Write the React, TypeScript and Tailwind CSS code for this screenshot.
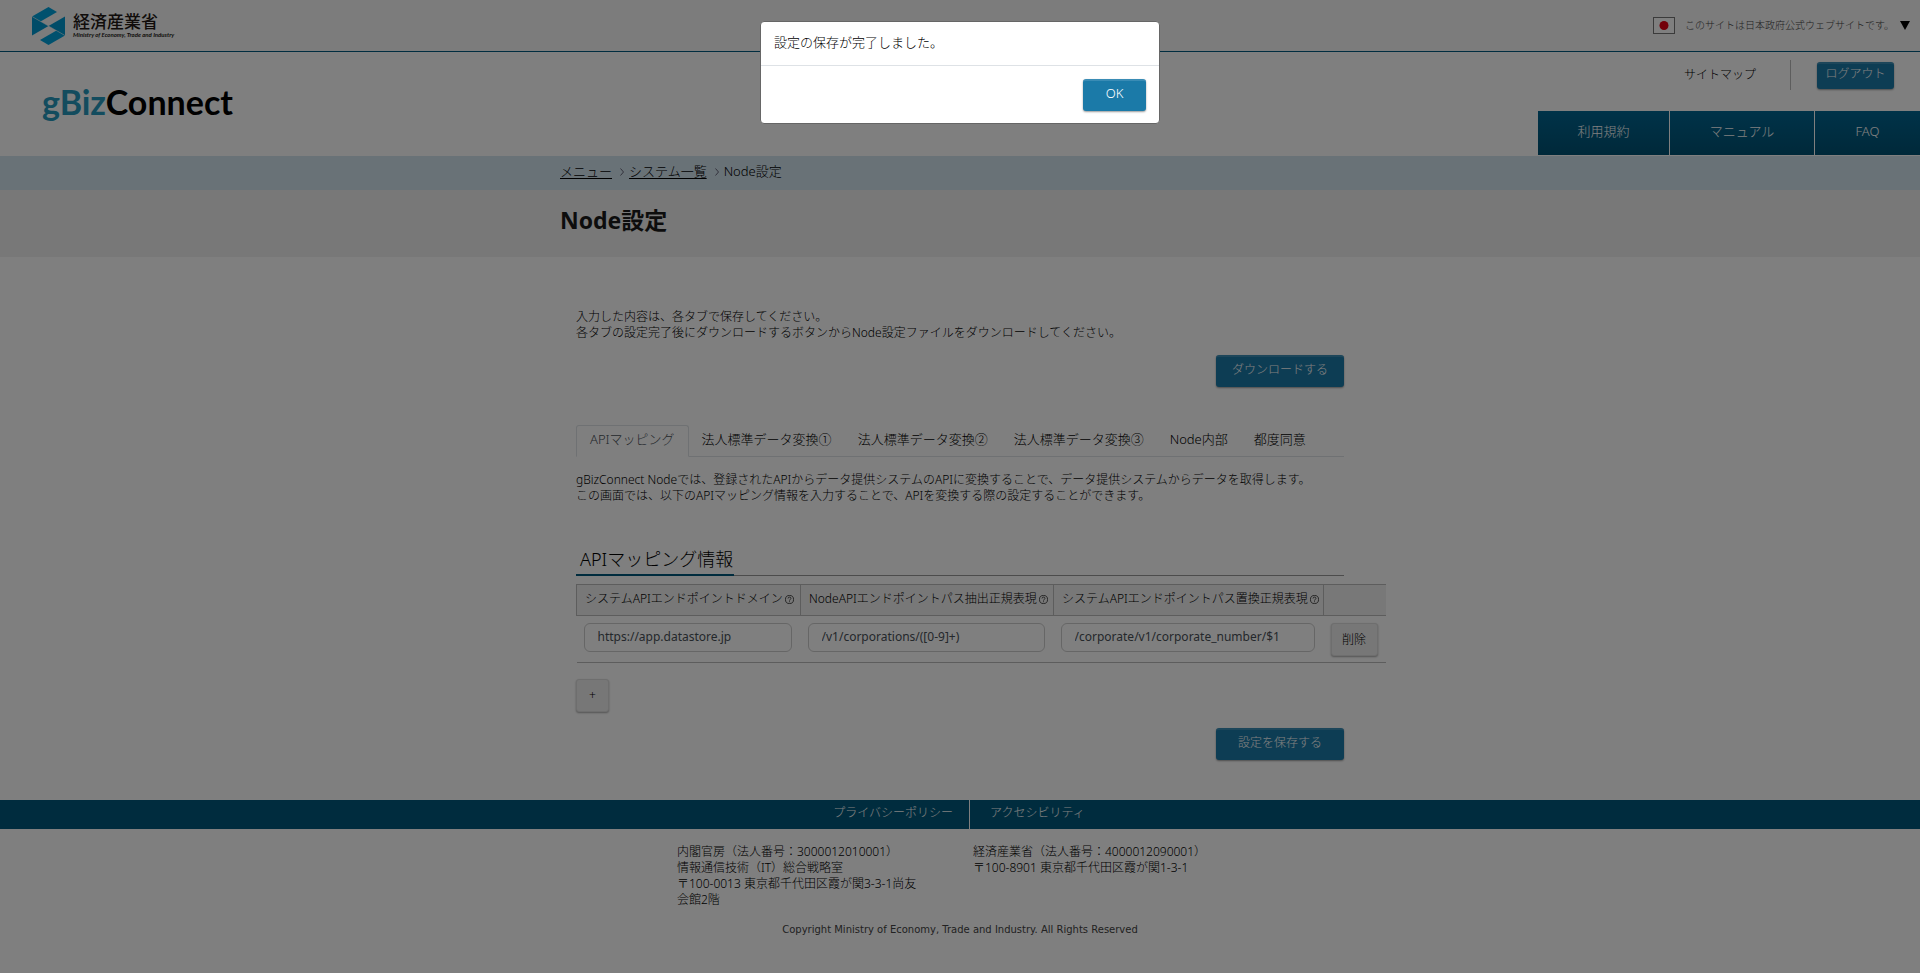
import type { ReactNode } from "react";

const tabs = [
  "APIマッピング",
  "法人標準データ変換①",
  "法人標準データ変換②",
  "法人標準データ変換③",
  "Node内部",
  "都度同意",
];

const columns = [
  { label: "システムAPIエンドポイントドメイン", value: "https://app.datastore.jp", width: "w-[224px]" },
  { label: "NodeAPIエンドポイントパス抽出正規表現", value: "/v1/corporations/([0-9]+)", width: "w-[253px]" },
  { label: "システムAPIエンドポイントパス置換正規表現", value: "/corporate/v1/corporate_number/$1", width: "w-[270px]" },
];

function PrimaryButton({ children, className }: { children: ReactNode; className: string }) {
  return (
    <button
      type="button"
      className={
        "flex items-center justify-center rounded-[3px] border-t-2 border-[#3a8cb5] bg-[#1b7aa8] pb-1 text-white shadow-[0_1px_2px_rgba(0,0,0,0.4)] " +
        className
      }
    >
      {children}
    </button>
  );
}

function GrayButton({ children, className }: { children: ReactNode; className: string }) {
  return (
    <button
      type="button"
      className={
        "flex items-center justify-center rounded-[3px] border border-[#dcdcdc] bg-[#efefef] text-xs shadow-[0_1px_2px_rgba(0,0,0,0.35)] " +
        className
      }
    >
      {children}
    </button>
  );
}

function HelpIcon() {
  return (
    <svg viewBox="0 0 16 16" className="size-[9px] shrink-0" fill="none" stroke="#222" strokeWidth="1.4" aria-hidden="true">
      <circle cx="8" cy="8" r="7.2" />
      <path d="M5.4 6.2c0-1.6 1.1-2.5 2.6-2.5s2.6.9 2.6 2.3c0 1.9-2.6 1.9-2.6 4" />
      <path d="M8 11.2v1.6" />
    </svg>
  );
}

function MinistryLogo() {
  return (
    <a href="#" className="flex items-center gap-2">
      <svg viewBox="0 0 33 38" className="h-[38px] w-[33px]" aria-hidden="true">
        <path d="M0 9.5 16.5 0 25 5 8.5 14.5z" fill="#00a3dc" />
        <path d="M0 9.5 16.5 19 0 28.5z" fill="#0098d0" />
        <path d="M33 9.5 16.5 19 33 28.5z" fill="#0098d0" />
        <path d="M24.5 23.5 33 28.5 16.5 38 8 33z" fill="#00a3dc" />
        <path d="M0 9.5 33 28.5" stroke="#f8f8f8" strokeWidth=".5" />
      </svg>
      <span className="flex flex-col whitespace-nowrap text-[#231815]">
        <span className="text-[17px] leading-[18px] font-medium">経済産業省</span>
        <span className="font-['Lato',sans-serif] text-[6px] leading-2 font-bold italic">
          Ministry of Economy, Trade and Industry
        </span>
      </span>
    </a>
  );
}

function Header() {
  return (
    <header>
      <div className="flex h-[52px] items-center justify-between border-b border-[#005a80] bg-[#f8f8f8] pr-2.5 pl-8">
        <MinistryLogo />
        <button type="button" className="flex items-center text-[10px] text-[#444]">
          <svg viewBox="0 0 22 17" className="mr-2.5 h-[17px] w-[22px]" aria-hidden="true">
            <rect x=".5" y=".5" width="21" height="16" fill="#fff" stroke="#777" />
            <circle cx="11" cy="8.5" r="4.5" fill="#e60012" />
          </svg>
          このサイトは日本政府公式ウェブサイトです。
          <svg viewBox="0 0 10 9" className="ml-1.5 h-[9px] w-[10px]" aria-hidden="true">
            <path d="M0 0h10L5 9z" fill="#000" />
          </svg>
        </button>
      </div>
      <div className="flex h-[104px] justify-between pb-px">
        <a href="#" className="mt-[30px] ml-[42px] font-['Lato',sans-serif] text-[34px] leading-10 font-bold text-black">
          <span className="text-[#2698bd]">gBiz</span>Connect
        </a>
        <div className="flex flex-col items-end justify-between">
          <div className="flex items-center gap-[26px] pt-2 pr-[26px] text-xs">
            <a href="#" className="pr-2">サイトマップ</a>
            <span className="h-[30px] w-px bg-[#bbb]" />
            <PrimaryButton className="h-[27px] w-[77px]">ログアウト</PrimaryButton>
          </div>
          <nav className="flex h-11 gap-px text-[13px] text-white">
            <a href="#" className="flex w-[131px] items-center justify-center bg-linear-to-b from-[#006692] to-[#005274] pb-0.5">利用規約</a>
            <a href="#" className="flex w-36 items-center justify-center bg-linear-to-b from-[#006692] to-[#005274] pb-0.5">マニュアル</a>
            <a href="#" className="flex w-[105px] items-center justify-center bg-linear-to-b from-[#006692] to-[#005274] pb-0.5">FAQ</a>
          </nav>
        </div>
      </div>
    </header>
  );
}

function Breadcrumb() {
  const arrow = (
    <svg viewBox="0 0 4 8" className="h-2 w-1" fill="none" stroke="#667" aria-hidden="true">
      <path d="M.5.5 3.5 4 .5 7.5" />
    </svg>
  );
  return (
    <nav aria-label="パンくず" className="h-[34px] bg-[#d2e4ef]">
      <ol className="mx-auto flex h-8 w-[800px] items-center text-[13px]">
        <li><a href="#" className="underline underline-offset-2">メニュー</a></li>
        <li className="flex items-center gap-[5px] pl-2">{arrow}<a href="#" className="underline underline-offset-2">システム一覧</a></li>
        <li className="flex items-center gap-[5px] pl-2">{arrow}Node設定</li>
      </ol>
    </nav>
  );
}

function MappingTable() {
  return (
    <table className="w-[810px] table-fixed border-collapse">
      <thead>
        <tr className="h-[31px] border-y border-[#bbb] bg-[#f1f1f1]">
          {columns.map((c) => (
            <th key={c.label} scope="col" className={"border border-[#bbb] pb-0.5 pl-2 text-left text-xs font-light whitespace-nowrap " + c.width}>
              <span className="flex items-center gap-0.5">{c.label}<HelpIcon /></span>
            </th>
          ))}
          <th />
        </tr>
      </thead>
      <tbody>
        <tr className="border-b border-[#bbb]">
          {columns.map((c) => (
            <td key={c.label} className="pt-[7px] pr-[9px] pb-2 pl-[7px] align-top">
              <input
                aria-label={c.label}
                defaultValue={c.value}
                className="h-[29px] w-full rounded-md border border-[#ccc] bg-white px-[13px] pb-0.5 text-xs font-normal text-[#495057]"
              />
            </td>
          ))}
          <td className="pt-[7px] pr-[9px] pb-1.5 pl-[7px] align-top">
            <GrayButton className="h-[33px] w-[47px]">削除</GrayButton>
          </td>
        </tr>
      </tbody>
    </table>
  );
}

function Footer() {
  return (
    <footer className="text-xs">
      <nav className="grid h-[29px] grid-cols-2 bg-[#00587c] pl-5 text-white">
        <a href="#" className="flex items-center justify-end border-r border-white pr-4 pb-1">プライバシーポリシー</a>
        <a href="#" className="flex items-center pb-1 pl-5">アクセシビリティ</a>
      </nav>
      <div className="mx-auto mt-[15px] grid w-[566px] grid-cols-[246px_1fr] gap-[50px] leading-4">
        <address className="not-italic">
          内閣官房（法人番号：3000012010001）<br />
          情報通信技術（IT）総合戦略室<br />
          〒100-0013 東京都千代田区霞が関3-3-1尚友会館2階
        </address>
        <address className="whitespace-nowrap not-italic">
          経済産業省（法人番号：4000012090001）<br />
          〒100-8901 東京都千代田区霞が関1-3-1
        </address>
      </div>
      <p className="mt-3.5 pb-10 text-center font-['DejaVu_Sans',sans-serif] text-[10px] leading-4 font-normal text-[#444]">
        Copyright Ministry of Economy, Trade and Industry. All Rights Reserved
      </p>
    </footer>
  );
}

function SavedDialog() {
  return (
    <div className="fixed inset-0 flex items-start justify-center bg-black/50 pt-[21px]">
      <div role="alertdialog" aria-label="設定の保存が完了しました。" className="w-[400px] rounded-[4px] border border-[#666] bg-white text-[13px]">
        <p className="border-b border-[#dee2e6] px-[13px] pt-2.5 pb-[13px] leading-5">設定の保存が完了しました。</p>
        <div className="flex justify-end px-[13px] pt-[13px] pb-3">
          <PrimaryButton className="h-8 w-[63px]">OK</PrimaryButton>
        </div>
      </div>
    </div>
  );
}

export default function App() {
  return (
    <div className="min-h-screen bg-white font-['Noto_Sans','Noto_Sans_CJK_JP',sans-serif] font-light text-black">
      <Header />
      <Breadcrumb />
      <div className="h-[67px] bg-[#f0f0f0]">
        <h1 className="mx-auto w-[800px] pt-3 text-[23px] leading-9 font-bold text-[#1a1a1a]">Node設定</h1>
      </div>
      <main className="mx-auto flex w-[768px] flex-col pt-[52px] text-xs">
        <p className="leading-4">
          入力した内容は、各タブで保存してください。<br />
          各タブの設定完了後にダウンロードするボタンからNode設定ファイルをダウンロードしてください。
        </p>
        <PrimaryButton className="mt-3.5 h-8 w-32 self-end">ダウンロードする</PrimaryButton>
        <ul role="tablist" className="mt-[38px] flex h-8 border-b border-[#dee2e6] text-[13px]">
          {tabs.map((t, i) => (
            <li key={t} role="presentation" className="-mb-px flex">
              <button
                type="button"
                role="tab"
                aria-selected={i === 0}
                className={
                  i === 0
                    ? "rounded-t-[3px] border border-[#dee2e6] border-b-white bg-white px-[13px] pb-0.5 text-[#495057]"
                    : "border border-transparent px-3 pb-0.5"
                }
              >
                {t}
              </button>
            </li>
          ))}
        </ul>
        <p className="mt-[15px] leading-4">
          gBizConnect Nodeでは、登録されたAPIからデータ提供システムのAPIに変換することで、データ提供システムからデータを取得します。<br />
          この画面では、以下のAPIマッピング情報を入力することで、APIを変換する際の設定することができます。
        </p>
        <div className="mt-10 mb-2 flex border-b border-[#999]">
          <h2 className="-mb-px border-b-2 border-[#00587c] pr-px pl-1 text-[18px] leading-[30px]">APIマッピング情報</h2>
        </div>
        <MappingTable />
        <GrayButton className="mt-4 h-[33px] w-[33px]">+</GrayButton>
        <PrimaryButton className="mt-4 mb-10 h-8 w-32 self-end">設定を保存する</PrimaryButton>
      </main>
      <Footer />
      <SavedDialog />
    </div>
  );
}
